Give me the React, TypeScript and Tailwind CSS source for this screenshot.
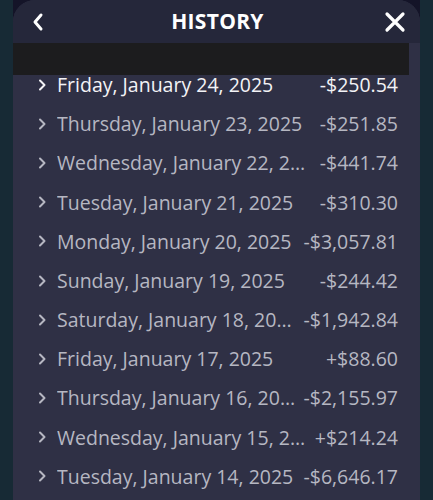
import React from "react";

const rows = [
  { date: "Friday, January 24, 2025", amount: "-$250.54", active: true },
  { date: "Thursday, January 23, 2025", amount: "-$251.85" },
  { date: "Wednesday, January 22, 2025", amount: "-$441.74" },
  { date: "Tuesday, January 21, 2025", amount: "-$310.30" },
  { date: "Monday, January 20, 2025", amount: "-$3,057.81" },
  { date: "Sunday, January 19, 2025", amount: "-$244.42" },
  { date: "Saturday, January 18, 2025", amount: "-$1,942.84" },
  { date: "Friday, January 17, 2025", amount: "+$88.60" },
  { date: "Thursday, January 16, 2025", amount: "-$2,155.97" },
  { date: "Wednesday, January 15, 2025", amount: "+$214.24" },
  { date: "Tuesday, January 14, 2025", amount: "-$6,646.17" },
];

const Chevron = ({ className }: { className?: string }) => (
  <svg width="9" height="12" viewBox="0 0 9 12" className={className}>
    <path d="M2 1.5 L6.5 6 L2 10.5" fill="none" stroke="currentColor" strokeWidth="2" strokeLinecap="round" strokeLinejoin="round" />
  </svg>
);

const App = () => {
  return (
    <div className="w-[433px] h-[500px] overflow-hidden bg-[#172a35] px-[13px] font-['Open_Sans',sans-serif]">
      <div className="h-full bg-[#141428]">
        <div className="h-full flex flex-col bg-[#2f3045] rounded-t-[22px] overflow-hidden">
          <div className="h-[43px] shrink-0 bg-[#25273a] flex items-center justify-between pl-[18px] pr-[14px] text-white relative z-10">
            <svg width="14" height="20" viewBox="0 0 14 20">
              <path d="M10 3 L4 10 L10 17" fill="none" stroke="currentColor" strokeWidth="3" strokeLinecap="round" strokeLinejoin="round" />
            </svg>
            <h1 className="text-[21px] font-bold tracking-[0.3px] ml-[6px]">HISTORY</h1>
            <svg width="22" height="22" viewBox="0 0 22 22">
              <path d="M3 3 L19 19 M19 3 L3 19" fill="none" stroke="currentColor" strokeWidth="3.2" strokeLinecap="round" />
            </svg>
          </div>
          <div className="h-[32px] shrink-0 bg-[#1c1c1e] mr-[11px] relative z-10" />
          <ul className="flex flex-col -mt-[10px]">
            {rows.map((row) => (
              <li
                key={row.date}
                className={`h-[39.2px] shrink-0 flex items-center gap-[6px] pl-[25px] pr-[22px] text-[19.5px] ${
                  row.active ? "text-[#f3f3f6]" : "text-[#b6b7c2]"
                }`}
              >
                <Chevron className="shrink-0 mr-[4px]" />
                <span className="flex-1 min-w-0 truncate">{row.date}</span>
                <span className="shrink-0">{row.amount}</span>
              </li>
            ))}
          </ul>
        </div>
      </div>
    </div>
  );
};

export default App;
